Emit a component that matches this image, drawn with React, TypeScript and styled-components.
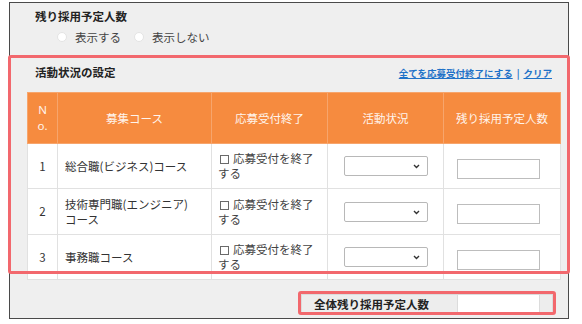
import React from "react";
import styled, { createGlobalStyle } from "styled-components";

/* global */
const GlobalStyle = createGlobalStyle`
  html, body {
    margin: 0;
    padding: 0;
    background: #ffffff;
    overflow: hidden;
  }
  body {
    font-family: "Noto Sans CJK JP", "Noto Sans", sans-serif;
    color: #333333;
  }
  * {
    box-sizing: border-box;
  }
`;

/* data */
interface Course {
  no: number;
  name: React.ReactNode;
}

const courses: Course[] = [
  { no: 1, name: "総合職(ビジネス)コース" },
  { no: 2, name: <>技術専門職(エンジニア)<br />コース</> },
  { no: 3, name: "事務職コース" },
];

/* styled */
const Panel = styled.div`
  position: relative;
  width: 560px;
  margin: 2px 0 0 9px;
  padding-bottom: 4px;
  background: #efefef;
  border: 1px solid #4a4a4a;
`;

const DisplaySection = styled.section`
  padding: 5px 0 0 25px;
`;

const Title = styled.h2`
  margin: 0;
  font-size: 11.5px;
  line-height: 16px;
  font-weight: bold;
  color: #222222;
`;

const RadioRow = styled.div`
  display: flex;
  align-items: center;
  margin-top: 5px;
  padding-left: 22px;
  font-size: 11.5px;
  line-height: 16px;
  color: #444444;
`;

const RadioLabel = styled.label`
  display: flex;
  align-items: center;
  gap: 8px;
  margin-right: 13px;
`;

const Radio = styled.input.attrs({ type: "radio" })`
  appearance: none;
  margin: 0;
  width: 10px;
  height: 10px;
  border-radius: 50%;
  background: #ffffff;
  border: 1px solid #e4e4e4;
`;

const StatusSection = styled.section`
  margin-top: 5px;
  padding: 14px 8px 0 17px;
`;

const SectionHead = styled.div`
  display: flex;
  align-items: center;
  justify-content: space-between;
  height: 16px;
  padding: 0 8px;
`;

const Links = styled.div`
  display: flex;
  align-items: center;
  gap: 4px;
  font-size: 9.5px;
  font-weight: bold;
  color: #1f72c8;
  margin-top: 2px;
`;

const TextLink = styled.a`
  color: inherit;
  text-decoration: underline;
  cursor: pointer;
`;

const Table = styled.table`
  width: 533px;
  margin-top: 12px;
  border-collapse: collapse;
  table-layout: fixed;
  background: #ffffff;
`;

const HeadCell = styled.th<{ $w: number; $latin?: boolean }>`
  width: ${(p) => p.$w}px;
  height: 51px;
  padding: 0;
  background: #f68b3f;
  border: 1px solid #f7a56c;
  color: #fff4ec;
  font-family: ${(p) => (p.$latin ? `"Noto Sans", sans-serif` : "inherit")};
  font-size: 11.5px;
  font-weight: normal;
  line-height: ${(p) => (p.$latin ? "16px" : "14px")};
  text-align: center;
  vertical-align: middle;
`;

const Row = styled.tr<{ $h: number }>`
  height: ${(p) => p.$h}px;
`;

const Cell = styled.td<{ $align?: string; $pad?: string }>`
  padding: ${(p) => p.$pad || "0 7px"};
  border: 1px solid #e1e1e1;
  font-size: 11.5px;
  line-height: 15px;
  color: #333333;
  text-align: ${(p) => p.$align || "left"};
  vertical-align: middle;
`;

const CheckLabel = styled.label`
  display: block;
  color: #444444;
`;

const Check = styled.input.attrs({ type: "checkbox" })`
  appearance: none;
  display: inline-block;
  width: 9px;
  height: 9px;
  margin: 0 4px 0 2px;
  border: 1px solid #6a6a6a;
  background: #ffffff;
  vertical-align: -1px;
`;

const SelectBox = styled.div`
  position: relative;
  display: inline-block;
  width: 84px;
  height: 20px;
  vertical-align: middle;
  svg {
    position: absolute;
    right: 8px;
    top: 8px;
    pointer-events: none;
  }
`;

const Select = styled.select`
  appearance: none;
  display: block;
  width: 100%;
  height: 100%;
  font-size: 11px;
  border: 1px solid #b8b8b8;
  border-radius: 2px;
  background: #ffffff;
  color: #333333;
`;

const NumberInput = styled.input.attrs({ type: "text" })`
  display: block;
  width: 83px;
  height: 20px;
  margin-top: 5px;
  border: 1px solid #bdbdbd;
  background: #ffffff;
`;

const TotalRow = styled.div`
  display: flex;
  width: 252px;
  height: 20px;
  margin: 14px 7px 0 auto;
  border: 1px solid #dcdcdc;
  background: #ededed;
`;

const TotalLabel = styled.div`
  width: 156px;
  padding-left: 12px;
  font-size: 11.5px;
  font-weight: bold;
  line-height: 18px;
  color: #222222;
  border-right: 1px solid #dcdcdc;
`;

const TotalInput = styled.input.attrs({ type: "text" })`
  width: 82px;
  height: 18px;
  border: none;
  border-right: 1px solid #dcdcdc;
  background: #ffffff;
`;

const Marker = styled.div<{ $l: number; $t: number; $w: number; $h: number }>`
  position: absolute;
  left: ${(p) => p.$l}px;
  top: ${(p) => p.$t}px;
  width: ${(p) => p.$w}px;
  height: ${(p) => p.$h}px;
  border: 3px solid #f2686d;
  border-radius: 3px;
  pointer-events: none;
`;

/* parts */
const StatusSelect: React.FC = (): JSX.Element => (
  <SelectBox>
    <Select defaultValue="">
      <option value=""></option>
    </Select>
    <svg width="7" height="5" viewBox="0 0 7 5">
      <path d="M1 1 L3.5 3.5 L6 1" fill="none" stroke="#333" strokeWidth="1.4" />
    </svg>
  </SelectBox>
);

/* DOM */
const App: React.FC = (): JSX.Element => {
  return (
    <>
      <GlobalStyle />
      <Panel>
        <DisplaySection>
          <Title>残り採用予定人数</Title>
          <RadioRow>
            <RadioLabel><Radio name="disp" />表示する</RadioLabel>
            <RadioLabel><Radio name="disp" />表示しない</RadioLabel>
          </RadioRow>
        </DisplaySection>

        <StatusSection>
          <SectionHead>
            <Title>活動状況の設定</Title>
            <Links>
              <TextLink>全てを応募受付終了にする</TextLink>
              <span>|</span>
              <TextLink>クリア</TextLink>
            </Links>
          </SectionHead>

          <Table>
            <thead>
              <tr>
                <HeadCell $w={30} $latin>N<br />o.</HeadCell>
                <HeadCell $w={154}>募集コース</HeadCell>
                <HeadCell $w={116}>応募受付終了</HeadCell>
                <HeadCell $w={116}>活動状況</HeadCell>
                <HeadCell $w={117}>残り採用予定人数</HeadCell>
              </tr>
            </thead>
            <tbody>
              {courses.map((c, i) => (
                <Row key={c.no} $h={i === 1 ? 46 : 45}>
                  <Cell $align="center" $pad="0">{c.no}</Cell>
                  <Cell>{c.name}</Cell>
                  <Cell $pad="0 6px">
                    <CheckLabel><Check />応募受付を終了<br />する</CheckLabel>
                  </Cell>
                  <Cell $align="center" $pad="0">
                    <StatusSelect />
                  </Cell>
                  <Cell $pad="0 0 0 13px">
                    <NumberInput />
                  </Cell>
                </Row>
              ))}
            </tbody>
          </Table>

          <TotalRow>
            <TotalLabel>全体残り採用予定人数</TotalLabel>
            <TotalInput />
          </TotalRow>
        </StatusSection>

        <Marker $l={-2} $t={52} $w={562} $h={219} />
        <Marker $l={288} $t={288} $w={258} $h={24} />
      </Panel>
    </>
  );
};

export default App;
